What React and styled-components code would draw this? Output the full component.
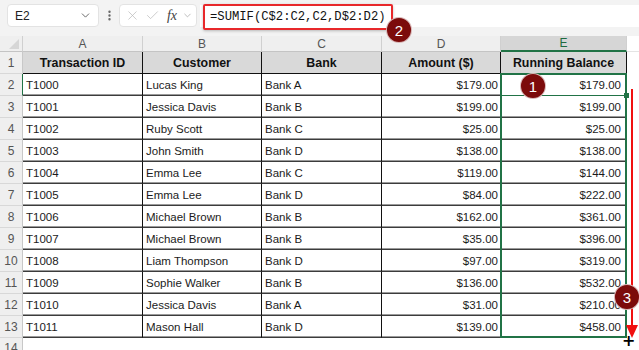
import React from "react";
import styled, { createGlobalStyle } from "styled-components";
import { ChevronDown, X, Check, EllipsisVertical } from "lucide-react";

const rows = [
  ["T1000", "Lucas King", "Bank A", "$179.00", "$179.00"],
  ["T1001", "Jessica Davis", "Bank B", "$199.00", "$199.00"],
  ["T1002", "Ruby Scott", "Bank C", "$25.00", "$25.00"],
  ["T1003", "John Smith", "Bank D", "$138.00", "$138.00"],
  ["T1004", "Emma Lee", "Bank C", "$119.00", "$144.00"],
  ["T1005", "Emma Lee", "Bank D", "$84.00", "$222.00"],
  ["T1006", "Michael Brown", "Bank B", "$162.00", "$361.00"],
  ["T1007", "Michael Brown", "Bank B", "$35.00", "$396.00"],
  ["T1008", "Liam Thompson", "Bank D", "$97.00", "$319.00"],
  ["T1009", "Sophie Walker", "Bank B", "$136.00", "$532.00"],
  ["T1010", "Jessica Davis", "Bank A", "$31.00", "$210.00"],
  ["T1011", "Mason Hall", "Bank D", "$139.00", "$458.00"],
];

const headers = ["Transaction ID", "Customer", "Bank", "Amount ($)", "Running Balance"];
const letters = ["A", "B", "C", "D", "E"];

const App = () => {
  return (
    <>
      <GlobalStyle />
      <Page>
        <FormulaBar>
          <NameBox>
            <span>E2</span>
            <ChevronDown size={13} strokeWidth={1.6} color="#555" />
          </NameBox>
          <Dots>
            <EllipsisVertical size={13} strokeWidth={2.4} color="#666" />
          </Dots>
          <FxBox>
            <X size={15} strokeWidth={1.1} color="#b5b5b5" />
            <Check size={15} strokeWidth={1.1} color="#b5b5b5" />
            <Fx>fx</Fx>
            <ChevronDown size={11} strokeWidth={1.4} color="#999" />
          </FxBox>
          <FormulaArea>
            <FormulaText>=SUMIF(C$2:C2,C2,D$2:D2)</FormulaText>
            <Badge $x={199} $y={25}>2</Badge>
          </FormulaArea>
        </FormulaBar>

        <SheetWrap>
          <Sheet>
            <Corner>
              <CornerTri />
            </Corner>
            {letters.map((l) => (
              <ColHead key={l} $active={l === "E"}>
                {l}
              </ColHead>
            ))}
            <Filler $head />

            <RowNum>1</RowNum>
            {headers.map((h) => (
              <HeadCell key={h}>{h}</HeadCell>
            ))}
            <Filler />

            {rows.map((r, i) => (
              <React.Fragment key={r[0]}>
                <RowNum $active={i === 0}>{i + 2}</RowNum>
                <Cell>{r[0]}</Cell>
                <Cell>{r[1]}</Cell>
                <Cell>{r[2]}</Cell>
                <Cell $right>{r[3]}</Cell>
                <Cell $right $last $activeCell={i === 0}>
                  {r[4]}
                </Cell>
                <Filler />
              </React.Fragment>
            ))}

            <RowNum $tail>14</RowNum>
            <Empty />
            <Empty />
            <Empty />
            <Empty />
            <Empty />
            <Filler />
          </Sheet>

          <Selection />
          <FillHandle />
          <Badge $x={533} $y={50}>1</Badge>
          <ArrowLine />
          <ArrowHead />
          <Badge $x={627} $y={261}>3</Badge>
          <PlusCursor>+</PlusCursor>
        </SheetWrap>
      </Page>
    </>
  );
};

export default App;

const GlobalStyle = createGlobalStyle`
  html, body {
    margin: 0;
    padding: 0;
    background: #ffffff;
  }
  body {
    font-family: "Liberation Sans", Arial, sans-serif;
    overflow: hidden;
  }
`;

const Page = styled.div`
  width: 639px;
  height: 350px;
  overflow: hidden;
  display: flex;
  flex-direction: column;
  background: #ffffff;
`;

const FormulaBar = styled.div`
  flex-shrink: 0;
  height: 36px;
  background: #f3f3f3;
  display: flex;
  align-items: flex-start;
  padding: 4px 0 0 7px;
  box-sizing: border-box;
  position: relative;
  z-index: 2;
`;

const NameBox = styled.div`
  width: 92px;
  height: 23px;
  box-sizing: border-box;
  background: #ffffff;
  border: 1px solid #e3e3e3;
  border-radius: 4px;
  display: flex;
  align-items: center;
  justify-content: space-between;
  padding: 0 6px 0 7px;
  font-size: 12px;
  color: #222;
`;

const Dots = styled.div`
  width: 20px;
  height: 23px;
  display: flex;
  align-items: center;
  justify-content: center;
`;

const FxBox = styled.div`
  width: 78px;
  height: 23px;
  box-sizing: border-box;
  background: #ffffff;
  border: 1px solid #e3e3e3;
  border-radius: 4px;
  display: flex;
  align-items: center;
  gap: 5px;
  padding: 0 3px 0 5px;
`;

const Fx = styled.span`
  font-family: "Liberation Serif", "Times New Roman", serif;
  font-style: italic;
  font-size: 14px;
  color: #444;
  margin-left: 2px;
`;

const FormulaArea = styled.div`
  position: relative;
  flex: 1;
  height: 22px;
  margin-left: 3px;
  margin-top: 1px;
  background: #ffffff;
`;

const FormulaText = styled.div`
  display: inline-block;
  margin-left: 3px;
  margin-top: -1px;
  height: 26px;
  box-sizing: border-box;
  width: 190px;
  border: 2px solid #e8282b;
  border-radius: 2px;
  box-shadow: 0 1px 3px rgba(0, 0, 0, 0.25);
  padding: 3px 0 0 5px;
  font-family: "Liberation Mono", "Courier New", monospace;
  font-size: 12.2px;
  line-height: 16px;
  color: #111;
  background: #ffffff;
  white-space: nowrap;
`;

const Badge = styled.div`
  position: absolute;
  left: ${(p) => p.$x - 13}px;
  top: ${(p) => p.$y - 13}px;
  width: 26px;
  height: 26px;
  border-radius: 50%;
  background: #7c0b0b;
  border: 1px solid rgba(255, 255, 255, 0.7);
  box-sizing: border-box;
  color: #ffffff;
  font-family: "Liberation Sans", Arial, sans-serif;
  font-size: 15px;
  display: flex;
  align-items: center;
  justify-content: center;
  z-index: 3;
`;

const SheetWrap = styled.div`
  position: relative;
  flex: 1;
  min-height: 0;
  overflow: hidden;
`;

const Sheet = styled.div`
  display: grid;
  grid-template-columns: 23px 120px 119px 120px 119px 126px 1fr;
  grid-template-rows: 16px 22px repeat(12, 22px) 22px;
  font-size: 11.5px;
  color: #1b1b1b;
`;

const Corner = styled.div`
  background: #efefef;
  border-right: 1px solid #d0d0d0;
  border-bottom: 1px solid #c4c4c4;
  position: relative;
`;

const CornerTri = styled.div`
  position: absolute;
  right: 3px;
  bottom: 2px;
  width: 0;
  height: 0;
  border-left: 10px solid transparent;
  border-bottom: 10px solid #d6d6d6;
`;

const ColHead = styled.div`
  background: ${(p) => (p.$active ? "#d6d6d6" : "#efefef")};
  color: ${(p) => (p.$active ? "#1e6b41" : "#555")};
  font-size: 12px;
  display: flex;
  align-items: center;
  justify-content: center;
  border-right: 1px solid #d0d0d0;
  border-bottom: ${(p) => (p.$active ? "2px solid #217346" : "1px solid #c4c4c4")};
  box-sizing: border-box;
`;

const Filler = styled.div`
  background: #ffffff;
  border-bottom: ${(p) => (p.$head ? "1px solid #e4e4e4" : "none")};
`;

const RowNum = styled.div`
  background: #efefef;
  color: #555;
  font-size: 12px;
  display: flex;
  align-items: ${(p) => (p.$tail ? "flex-start" : "center")};
  padding-top: ${(p) => (p.$tail ? "3px" : "0")};
  justify-content: center;
  border-bottom: 1px solid #d8d8d8;
  border-right: 1px solid ${(p) => (p.$active ? "#217346" : "#c8c8c8")};
  box-sizing: border-box;
`;

const HeadCell = styled.div`
  background: #d9d9d9;
  font-weight: bold;
  font-size: 12.4px;
  color: #111;
  display: flex;
  align-items: center;
  justify-content: center;
  border-right: 1px solid #111;
  border-bottom: 1px solid #111;
  box-sizing: border-box;
  white-space: nowrap;
`;

const Cell = styled.div`
  background: #ffffff;
  display: flex;
  align-items: center;
  justify-content: ${(p) => (p.$right ? "flex-end" : "flex-start")};
  padding: 0 ${(p) => (p.$last ? "5px" : "2px")} 0 3px;
  border-right: 1px solid #111;
  border-bottom: 1px solid ${(p) => (p.$activeCell ? "#217346" : "#3c3c3c")};
  box-shadow: inset 0 -1px 0 ${(p) => (p.$activeCell ? "transparent" : "#9a9a9a")};
  box-sizing: border-box;
  white-space: nowrap;
`;

const Empty = styled.div`
  background: #ffffff;
`;

const Selection = styled.div`
  position: absolute;
  left: 500px;
  top: 37px;
  width: 127px;
  height: 265px;
  border: 2px solid #217346;
  box-sizing: border-box;
  pointer-events: none;
`;

const FillHandle = styled.div`
  position: absolute;
  left: 624px;
  top: 57px;
  width: 5px;
  height: 5px;
  background: #217346;
`;

const ArrowLine = styled.div`
  position: absolute;
  left: 631px;
  top: 53px;
  width: 2px;
  height: 238px;
  background: #f01010;
`;

const ArrowHead = styled.div`
  position: absolute;
  left: 626px;
  top: 289px;
  width: 0;
  height: 0;
  border-left: 6px solid transparent;
  border-right: 6px solid transparent;
  border-top: 13px solid #f01010;
`;

const PlusCursor = styled.div`
  position: absolute;
  left: 622px;
  top: 297px;
  font-family: "DejaVu Sans", sans-serif;
  font-size: 16px;
  font-weight: bold;
  color: #000;
  line-height: 16px;
`;
